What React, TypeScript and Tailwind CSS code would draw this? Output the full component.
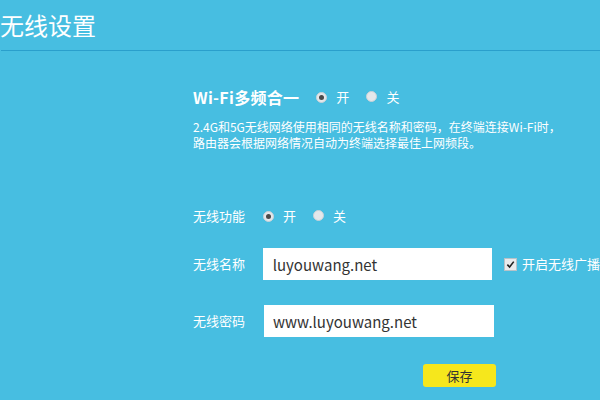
import React from "react";

const font = { fontFamily: '"Noto Sans CJK SC", "Noto Sans", sans-serif' };

function Radio({ checked }: { checked: boolean }) {
  return (
    <span className="inline-flex h-[11px] w-[11px] items-center justify-center rounded-full bg-[#e4e7ea] border border-[#c9d2d8]">
      {checked && <span className="h-[5px] w-[5px] rounded-full bg-[#4a4a4a]" />}
    </span>
  );
}

function RadioGroup({ value }: { value: boolean }) {
  return (
    <div className="flex items-center text-[13px] text-white">
      <Radio checked={value} />
      <span className="ml-[9px]">开</span>
      <span className="ml-[17px]"><Radio checked={!value} /></span>
      <span className="ml-[9px]">关</span>
    </div>
  );
}

export default function App() {
  return (
    <div className="h-[400px] w-[600px] overflow-hidden bg-[#47bee1] text-white" style={font}>
      <div className="flex h-[51px] items-start border-b border-[#2a9fcc] ml-[1px]">
        <div className="mt-[9px] -ml-[1px] text-[24px] leading-[32px]">无线设置</div>
      </div>
      <div className="pl-[193px]">
        <div className="mt-[36px] flex h-[20px] items-center">
          <span className="text-[16px] font-bold tracking-[0.3px]">Wi-Fi多频合一</span>
          <span className="ml-[17px]"><RadioGroup value={true} /></span>
        </div>
        <div className="mt-[12px] text-[12px] leading-[16px]">
          2.4G和5G无线网络使用相同的无线名称和密码，在终端连接Wi-Fi时，
          <br />
          路由器会根据网络情况自动为终端选择最佳上网频段。
        </div>
        <div className="mt-[55px] flex h-[20px] items-center">
          <span className="text-[13px] w-[70px]">无线功能</span>
          <RadioGroup value={true} />
        </div>
        <div className="mt-[22px] flex items-center">
          <span className="text-[13px] w-[70px]">无线名称</span>
          <input
            readOnly
            value="luyouwang.net"
            className="h-[32px] w-[230px] bg-white px-[10px] text-[15px] text-[#333] outline-none"
            style={font}
          />
          <span className="ml-[12px] flex h-[13px] w-[13px] items-center justify-center bg-[#e8eaec] border border-[#b8c2c8]">
            <svg viewBox="0 0 10 10" className="h-[9px] w-[9px]">
              <path d="M1.5 5.2 L4 7.8 L8.6 1.8" fill="none" stroke="#222" strokeWidth="1.8" />
            </svg>
          </span>
          <span className="ml-[5px] text-[13px] whitespace-nowrap">开启无线广播</span>
        </div>
        <div className="mt-[25px] flex items-center">
          <span className="text-[13px] w-[71px]">无线密码</span>
          <input
            readOnly
            value="www.luyouwang.net"
            className="h-[32px] w-[230px] bg-white px-[9px] text-[15px] text-[#333] outline-none"
            style={font}
          />
        </div>
        <div className="mt-[27px] ml-[230px] flex h-[23px] w-[73px] items-center justify-center rounded-[3px] bg-[#f6e71c] text-[13px] text-[#333]">
          保存
        </div>
      </div>
    </div>
  );
}
